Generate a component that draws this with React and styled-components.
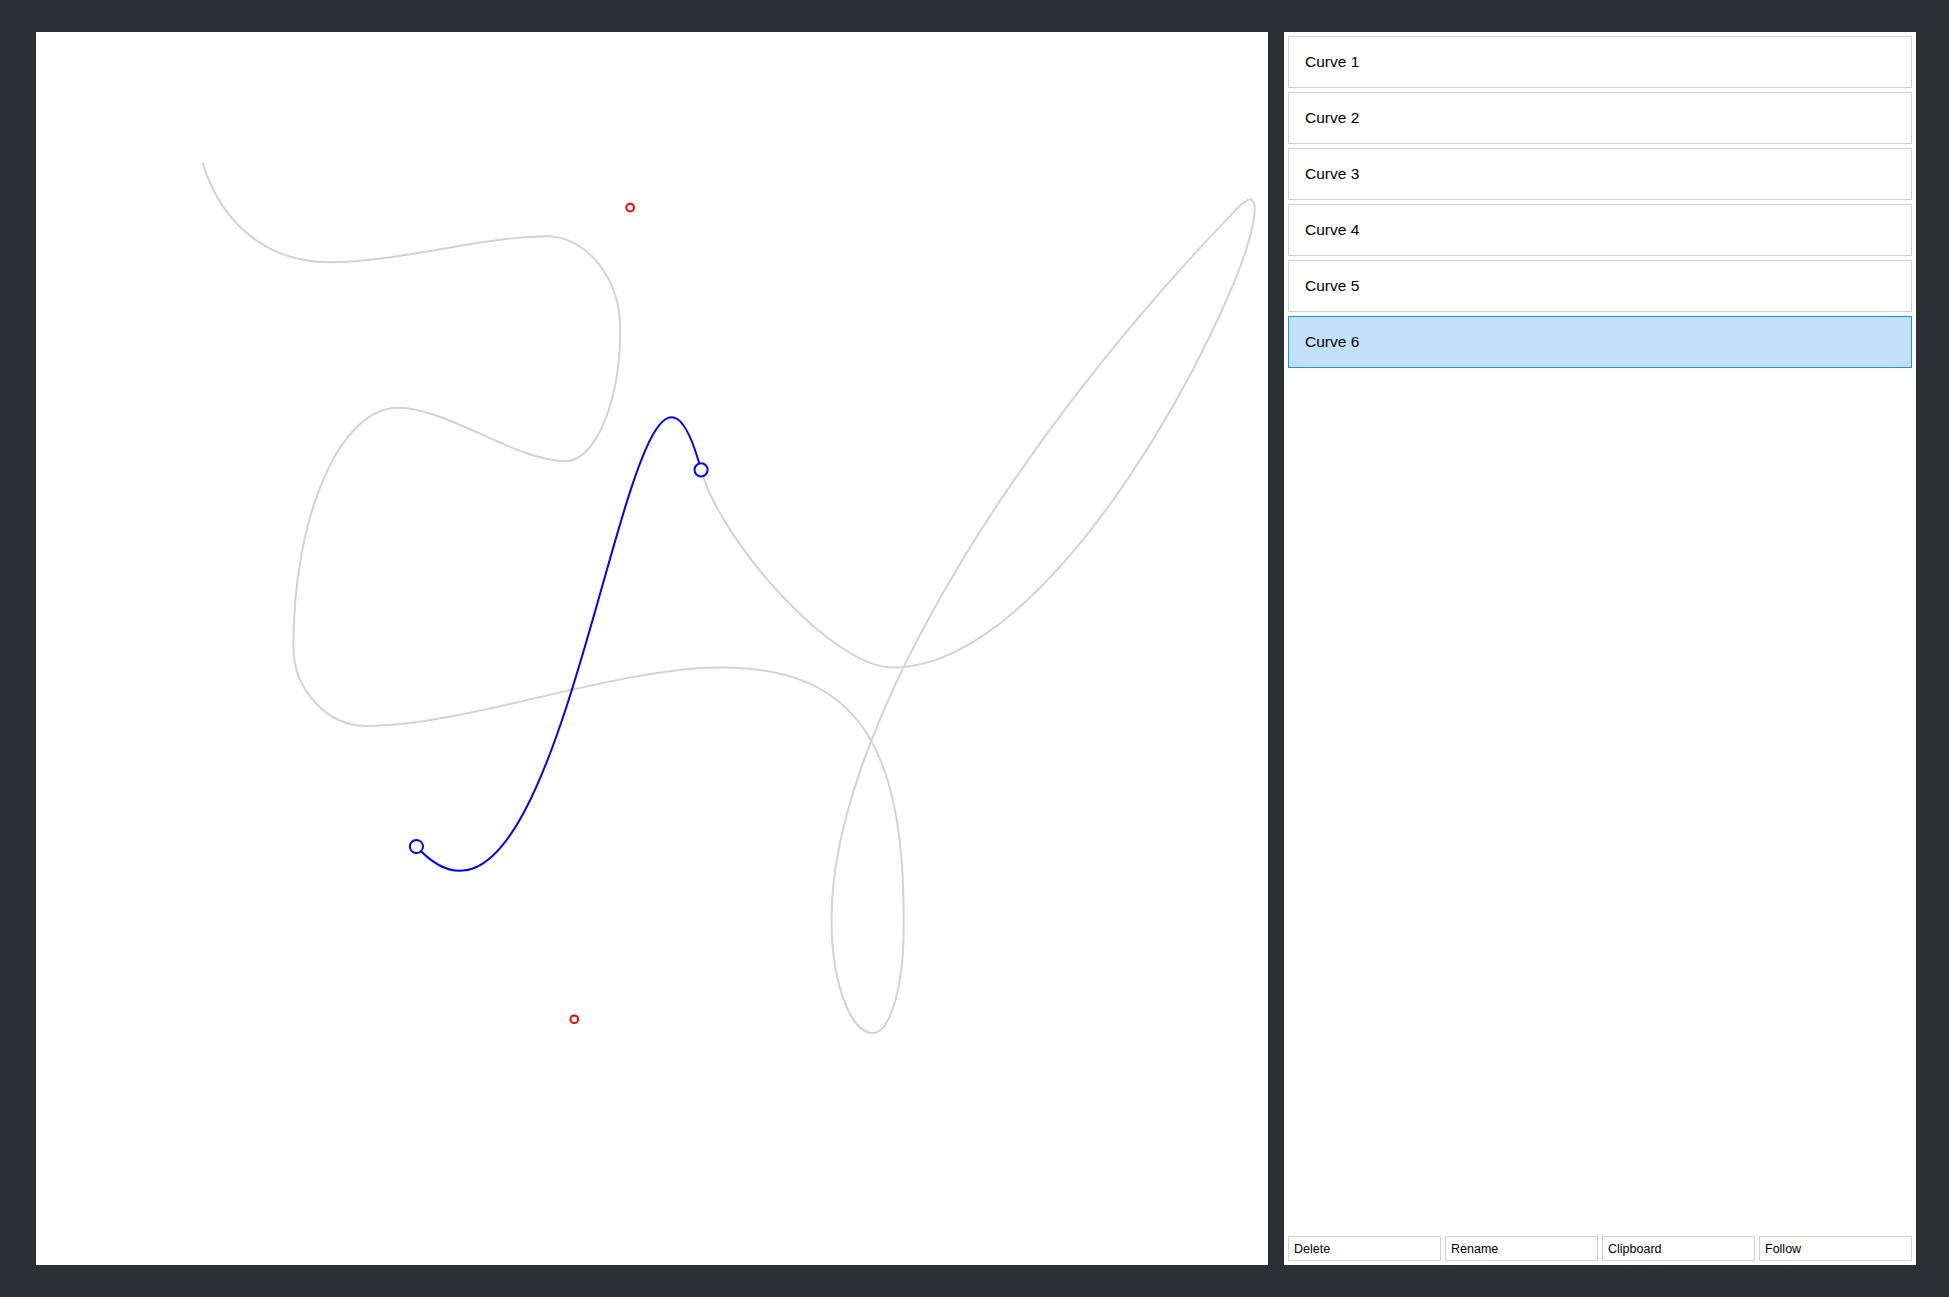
import React, { useState } from "react";
import styled, { createGlobalStyle } from "styled-components";

// spline segments, in the coordinates of the 1568px preview (scaled by the viewBox)
const greyPath = [
  "M 163 131",
  "C 178 180 215 211 265 211",
  "C 320 211 390 190 440 190",
  "C 472 190 499 224 499 265",
  "C 499 323 479 371 455 371",
  "C 415 371 360 328 320 328",
  "C 274 328 236 414 236 520",
  "C 236 555 263 584 295 584",
  "C 375 584 495 537 580 537",
  "C 690 537 728 600 727 745",
  "C 727 795 716 831 702 831",
  "C 684 831 669 790 669 740",
  "C 668 600 800 370 995 168",
  "C 1004 158.5 1013 154 1008 180",
  "C 995 250 850 537 718 537",
  "C 670 537 580 436 564 378",
].join(" ");

const active = {
  from: [564, 378],
  c1: [507, 167],
  c2: [462, 820],
  to: [335, 681],
};

const curves = ["Curve 1", "Curve 2", "Curve 3", "Curve 4", "Curve 5", "Curve 6"];
const actions = ["Delete", "Rename", "Clipboard", "Follow"];

export default function App() {
  const [selected, setSelected] = useState(5);
  const { from, c1, c2, to } = active;

  return (
    <>
      <GlobalStyle />
      <Page>
        <Canvas>
          <svg
            width="1232"
            height="1233"
            viewBox="28.96 25.74 991.15 991.95"
            preserveAspectRatio="none"
          >
            <path
              d={greyPath}
              fill="none"
              stroke="#d3d3d3"
              strokeWidth="2"
              vectorEffect="non-scaling-stroke"
            />
            <path
              d={`M ${from} C ${c1} ${c2} ${to}`}
              fill="none"
              stroke="#0000ff"
              strokeWidth="2"
              vectorEffect="non-scaling-stroke"
            />
            {[from, to].map(([x, y], i) => (
              <circle
                key={"p" + i}
                cx={x}
                cy={y}
                r="5.3"
                fill="#fff"
                stroke="#0000ff"
                strokeWidth="2"
                vectorEffect="non-scaling-stroke"
              />
            ))}
            {[c1, c2].map(([x, y], i) => (
              <circle
                key={"c" + i}
                cx={x}
                cy={y}
                r="3.1"
                fill="#fff"
                stroke="#ff0000"
                strokeWidth="2"
                vectorEffect="non-scaling-stroke"
              />
            ))}
          </svg>
        </Canvas>
        <Panel>
          <CurveList>
            {curves.map((name, i) => (
              <CurveItem key={name} $selected={i === selected} onClick={() => setSelected(i)}>
                {name}
              </CurveItem>
            ))}
          </CurveList>
          <Toolbar>
            {actions.map((a) => (
              <ToolButton key={a}>{a}</ToolButton>
            ))}
          </Toolbar>
        </Panel>
      </Page>
    </>
  );
}

const GlobalStyle = createGlobalStyle`
  html, body {
    margin: 0;
    padding: 0;
    background: #2b3035;
    font-family: "Liberation Sans", Arial, sans-serif;
  }
`;

const Page = styled.div`
  display: flex;
  gap: 16px;
  height: 100vh;
  padding: 32px 33px 32px 36px;
  box-sizing: border-box;
`;

const Canvas = styled.div`
  flex: none;
  width: 1232px;
  height: 1233px;
  background: #fff;

  svg {
    display: block;
  }
`;

const Panel = styled.div`
  flex: 1;
  display: flex;
  flex-direction: column;
  padding: 4px;
  background: #fff;
`;

const CurveList = styled.div`
  flex: 1;
  display: flex;
  flex-direction: column;
  gap: 4px;
`;

const CurveItem = styled.div`
  display: flex;
  align-items: center;
  height: 52px;
  box-sizing: border-box;
  padding: 0 16px;
  border: 1px solid ${(p) => (p.$selected ? "#1e90ff" : "#d3d3d3")};
  background: ${(p) => (p.$selected ? "#c2e0fc" : "#fff")};
  color: #000;
  font-size: 15.5px;
  cursor: pointer;
`;

const Toolbar = styled.div`
  display: grid;
  grid-template-columns: repeat(4, 1fr);
  gap: 4px;
`;

const ToolButton = styled.button`
  height: 25px;
  box-sizing: border-box;
  padding: 0 5px;
  border: 1px solid #d3d3d3;
  background: #fff;
  color: #000;
  font-family: "Liberation Sans", Arial, sans-serif;
  font-size: 12.5px;
  text-align: left;
`;
